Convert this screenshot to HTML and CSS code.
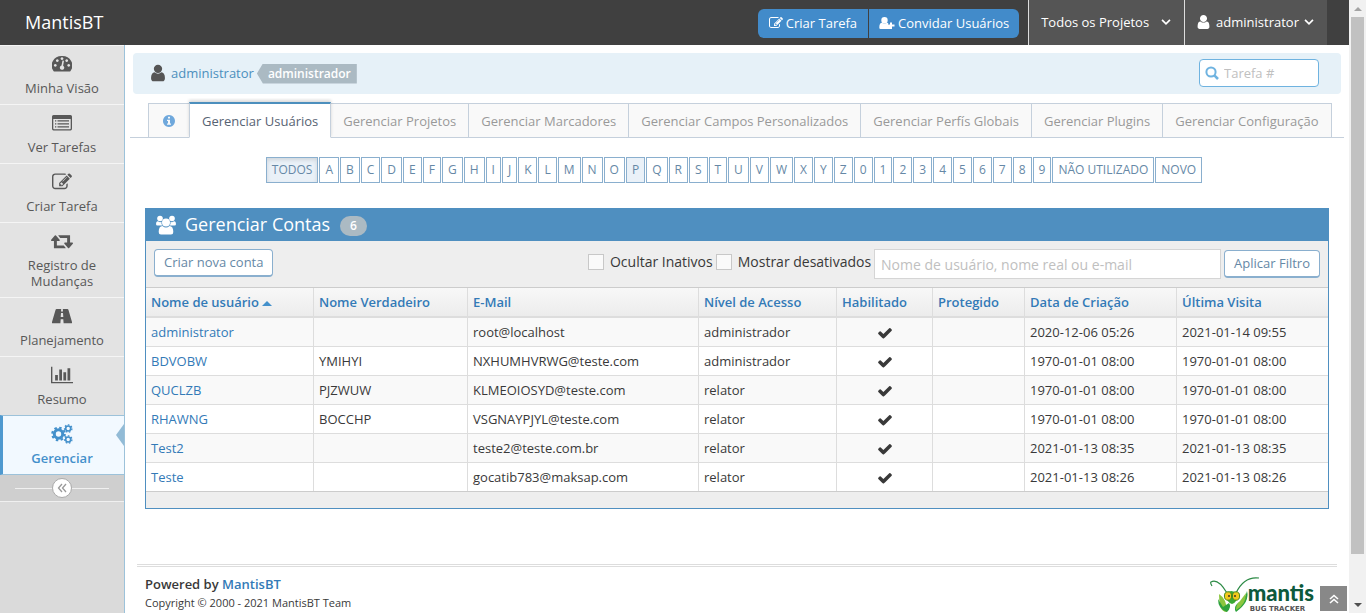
FILE: index.html
```html
<!DOCTYPE html>
<html lang="pt-BR">
<head>
<meta charset="utf-8">
<title>Gerenciar Usuários - MantisBT</title>
<link rel="stylesheet" href="styles.css">
</head>
<body>
<svg class="symbols" aria-hidden="true">
  <symbol id="i-user" viewBox="192 64 1408 1664"><path d="M1536 1399q0 109-62.500 187t-150.500 78h-854q-88 0-150.500-78t-62.500-187q0-85 8.500-160.500t31.500-152 58.500-131 94-89 134.500-34.500q131 128 313 128t313-128q76 0 134.500 34.500t94 89 58.500 131 31.500 152 8.500 160.500zm-256-887q0 159-112.500 271.500t-271.500 112.500-271.500-112.500-112.500-271.500 112.500-271.500 271.500-112.500 271.500 112.500 112.500 271.500z"/></symbol>
  <symbol id="i-edit" viewBox="0 0 1792 1792"><path d="M888 1184l116-116-152-152-116 116v56h96v96h56zm440-720q-16-16-33 1l-350 350q-17 17-1 33t33-1l350-350q17-17 1-33zm80 594v190q0 119-84.500 203.500t-203.500 84.500h-832q-119 0-203.500-84.500t-84.500-203.500v-832q0-119 84.500-203.500t203.500-84.500h832q63 0 117 25 15 7 18 23 3 17-9 29l-49 49q-14 14-32 8-23-6-45-6h-832q-66 0-113 47t-47 113v832q0 66 47 113t113 47h832q66 0 113-47t47-113v-126q0-13 9-22l64-64q15-15 35-7t20 29zm-96-738l288 288-672 672h-288v-288zm444 132l-92 92-288-288 92-92q28-28 68-28t68 28l152 152q28 28 28 68t-28 68z"/></symbol>
  <symbol id="i-check" viewBox="0 0 1792 1792"><path d="M1671 566q0 40-28 68l-724 724-136 136q-28 28-68 28t-68-28l-136-136-362-362q-28-28-28-68t28-68l136-136q28-28 68-28t68 28l294 295 656-657q28-28 68-28t68 28l136 136q28 28 28 68z"/></symbol>
  <symbol id="i-down" viewBox="0 0 10 10"><path d="M1.700 3.200l3.300 3.300L8.300 3.200" fill="none" stroke="currentColor" stroke-width="1.400"/></symbol>
</svg>
<div class="page">
<div class="app">
  <header class="navbar">
    <a class="brand" href="#">MantisBT</a>
    <div class="nav-buttons">
      <a href="#" class="nav-btn"><svg class="ic14"><use href="#i-edit"/></svg>Criar Tarefa</a>
      <a href="#" class="nav-btn"><svg class="ic16" viewBox="0 0 16 14"><path d="M5.500 1a3.200 3.200 0 0 1 0 6.400a3.200 3.200 0 0 1 0-6.400zM3 6.800q2.500 2 5 0q1 0 1.800.8H9v3h2V13H1.500Q.3 13 .3 11.500Q.3 7 3 6.800zM11 6.500h2v2h2.500v2H13V13h-2v-2.500H9v-2h2z"/></svg>Convidar Usuários</a>
    </div>
    <button class="nav-drop projects">Todos os Projetos<svg class="ic12"><use href="#i-down"/></svg></button>
    <button class="nav-drop account"><svg class="ic14 avatar"><use href="#i-user"/></svg>administrator<svg class="ic12"><use href="#i-down"/></svg></button>
  </header>
  <div class="body">
    <nav class="sidebar">
      <a href="#" class="item"><svg class="side-ic" viewBox="0 0 20 20"><path fill-rule="evenodd" d="M10 2a10 9.500 0 0 1 8.500 15q-.4.500-1 .500h-15q-.6 0-1-.500A10 9.500 0 0 1 10 2zM10 3.200a1.400 1.400 0 1 0 .01 0zM5.300 5.200a1.400 1.400 0 1 0 .01 0zM14.700 5.200a1.400 1.400 0 1 0 .01 0zM3.300 10a1.400 1.400 0 1 0 .01 0zM16.700 10a1.400 1.400 0 1 0 .01 0zM10.500 6.500l-1 5a2.200 2.200 0 1 0 1.600.2l.9-5z"/></svg>Minha Visão</a>
      <a href="#" class="item"><svg class="side-ic" viewBox="0 0 20 20"><path fill-rule="evenodd" d="M1.500 2h17Q20 2 20 3.500v12Q20 17.500 18.500 17.500h-17Q0 17.500 0 15.500v-12Q0 2 1.500 2zM1.300 6v9.500q0 .7.7.7h16q.7 0 .7-.7V6zM3 7.200h1.300v1.300H3zM5.500 7.200H17v1.300H5.500zM3 10.200h1.300v1.300H3zM5.500 10.200H17v1.300H5.500zM3 13.200h1.300v1.300H3zM5.500 13.200H17v1.300H5.500z"/></svg>Ver Tarefas</a>
      <a href="#" class="item"><svg class="side-ic"><use href="#i-edit"/></svg>Criar Tarefa</a>
      <a href="#" class="item"><svg class="side-ic wide" viewBox="0 130 1920 1530"><path d="M1280 1504q0 13-9.500 22.500t-22.500 9.500h-960q-8 0-13.500-2t-9-7-5.500-8-3-11.500-1-11.500v-600h-192q-26 0-45-19t-19-45q0-24 15-41l320-384q19-22 49-22t49 22l320 384q15 17 15 41 0 26-19 45t-45 19h-192v384h576q16 0 25 11l160 192q7 10 7 21zm640-416q0 24-15 41l-320 384q-20 23-49 23t-49-23l-320-384q-15-17-15-41 0-26 19-45t45-19h192v-384h-576q-16 0-25-12l-160-192q-7-9-7-20 0-13 9.500-22.500t22.500-9.500h960q8 0 13.500 2t9 7 5.500 8 3 11.500 1 11.500v600h192q26 0 45 19t19 45z"/></svg>Registro de Mudanças</a>
      <a href="#" class="item"><svg class="side-ic" viewBox="0 0 20 20"><path fill-rule="evenodd" d="M4.500 3h4.700L9 5.500h2L10.800 3h4.700q.6 0 .9.700L20 16q.3 1.300-.6 1.300H11.600l-.3-4H8.700l-.3 4H.6Q-.3 17.300 0 16L3.600 3.700Q3.900 3 4.500 3zM9 7l-.3 4h2.600L11 7z"/></svg>Planejamento</a>
      <a href="#" class="item"><svg class="side-ic wide" viewBox="0 0 2048 1792"><path d="M640 896v512h-256v-512h256zm384-512v1024h-256v-1024h256zm1024 1152v128h-2048v-1536h128v1408h1920zm-640-896v768h-256v-768h256zm384-384v1152h-256v-1152h256z"/></svg>Resumo</a>
      <a href="#" class="item active"><svg class="side-ic wide" viewBox="0 0 22 20"><g fill="none" stroke="currentColor"><circle cx="7.500" cy="10" r="4.200" stroke-width="3"/><circle cx="7.500" cy="10" r="6.300" stroke-width="2" stroke-dasharray="2.470 2.470"/><circle cx="17.200" cy="4.500" r="2.500" stroke-width="1.600"/><circle cx="17.200" cy="4.500" r="3.700" stroke-width="1.300" stroke-dasharray="1.660 1.660"/><circle cx="17.200" cy="15.500" r="2.500" stroke-width="1.600"/><circle cx="17.200" cy="15.500" r="3.700" stroke-width="1.300" stroke-dasharray="1.660 1.660"/></g></svg>Gerenciar</a>
      <div class="collapse"><button class="collapse-btn" aria-label="Recolher menu"><svg class="ic12" viewBox="0 0 12 12"><path d="M6 2L2.500 6L6 10M10 2L6.500 6L10 10" fill="none" stroke="currentColor" stroke-width="1.300"/></svg></button></div>
    </nav>
    <main class="main">
      <div class="crumbs">
        <svg class="crumb-user"><use href="#i-user"/></svg>
        <a href="#">administrator</a><span class="role">administrador</span>
        <label class="search"><svg class="ic14" viewBox="0 0 14 14"><path d="M9.600 9.600L13 13" stroke="currentColor" stroke-width="2.600"/><circle cx="6" cy="6" r="4.600" fill="none" stroke="currentColor" stroke-width="2"/></svg><input type="text" placeholder="Tarefa #" aria-label="Tarefa #"></label>
      </div>
      <ul class="tabs">
        <li><a href="#" class="info" aria-label="Informações"><svg class="ic12" viewBox="0 0 12 12"><path fill-rule="evenodd" d="M6 0a6 6 0 1 1-.01 0zM5 1.800v1.800h2V1.800zM4 4.700v1.200h1v2.600H4v1.300h4V8.500H7V4.700z"/></svg></a></li>
        <li class="current"><a href="#">Gerenciar Usuários</a></li>
        <li><a href="#">Gerenciar Projetos</a></li>
        <li><a href="#">Gerenciar Marcadores</a></li>
        <li><a href="#">Gerenciar Campos Personalizados</a></li>
        <li><a href="#">Gerenciar Perfís Globais</a></li>
        <li><a href="#">Gerenciar Plugins</a></li>
        <li><a href="#">Gerenciar Configuração</a></li>
      </ul>
      <div class="letters">
        <a href="#" class="on">TODOS</a><a href="#">A</a><a href="#">B</a><a href="#">C</a><a href="#">D</a><a href="#">E</a><a href="#">F</a><a href="#">G</a><a href="#">H</a><a href="#">I</a><a href="#">J</a><a href="#">K</a><a href="#">L</a><a href="#">M</a><a href="#">N</a><a href="#">O</a><a href="#" class="hover">P</a><a href="#">Q</a><a href="#">R</a><a href="#">S</a><a href="#">T</a><a href="#">U</a><a href="#">V</a><a href="#">W</a><a href="#">X</a><a href="#">Y</a><a href="#">Z</a><a href="#">0</a><a href="#">1</a><a href="#">2</a><a href="#">3</a><a href="#">4</a><a href="#">5</a><a href="#">6</a><a href="#">7</a><a href="#">8</a><a href="#">9</a><a href="#">NÃO UTILIZADO</a><a href="#">NOVO</a>
      </div>
      <section class="widget">
        <h4 class="widget-head"><svg class="users" viewBox="0 0 20 20"><circle cx="4" cy="3.500" r="2.800"/><circle cx="16" cy="3.500" r="2.800"/><path d="M2 6.300Q4 7.700 5.500 6.800Q5 9 6.500 10.500H1.500Q0 10.500 0 9Q0 6 2 6.300zM18 6.300Q16 7.700 14.500 6.800Q15 9 13.500 10.500h5Q20 10.500 20 9Q20 6 18 6.300z"/><circle cx="10" cy="7.500" r="4"/><path d="M6.500 11Q10 14 13.500 11Q17.300 11 17.300 17Q17.300 19.500 15 19.500H5Q2.700 19.500 2.700 17Q2.700 11 6.500 11z"/></svg><span class="title">Gerenciar Contas</span><span class="badge">6</span></h4>
        <form class="toolbar">
          <button type="button" class="btn create">Criar nova conta</button>
          <label class="check"><input type="checkbox">Ocultar Inativos</label>
          <label class="check"><input type="checkbox">Mostrar desativados</label>
          <input class="filter" type="text" placeholder="Nome de usuário, nome real ou e-mail" aria-label="Nome de usuário, nome real ou e-mail">
          <button type="button" class="btn">Aplicar Filtro</button>
        </form>
        <table>
          <colgroup><col class="c-user"><col class="c-name"><col class="c-mail"><col class="c-level"><col class="c-on"><col class="c-lock"><col class="c-date"><col></colgroup>
          <thead><tr><th><a href="#">Nome de usuário</a> <svg class="sort" viewBox="0 0 10 5"><path d="M0 5L5 0L10 5z"/></svg></th><th><a href="#">Nome Verdadeiro</a></th><th><a href="#">E-Mail</a></th><th><a href="#">Nível de Acesso</a></th><th><a href="#">Habilitado</a></th><th><a href="#">Protegido</a></th><th><a href="#">Data de Criação</a></th><th><a href="#">Última Visita</a></th></tr></thead>
          <tbody>
            <tr><td><a href="#">administrator</a></td><td></td><td>root@localhost</td><td>administrador</td><td class="tick"><svg><use href="#i-check"/></svg></td><td></td><td>2020-12-06 05:26</td><td>2021-01-14 09:55</td></tr>
            <tr><td><a href="#">BDVOBW</a></td><td>YMIHYI</td><td>NXHUMHVRWG@teste.com</td><td>administrador</td><td class="tick"><svg><use href="#i-check"/></svg></td><td></td><td>1970-01-01 08:00</td><td>1970-01-01 08:00</td></tr>
            <tr><td><a href="#">QUCLZB</a></td><td>PJZWUW</td><td>KLMEOIOSYD@teste.com</td><td>relator</td><td class="tick"><svg><use href="#i-check"/></svg></td><td></td><td>1970-01-01 08:00</td><td>1970-01-01 08:00</td></tr>
            <tr><td><a href="#">RHAWNG</a></td><td>BOCCHP</td><td>VSGNAYPJYL@teste.com</td><td>relator</td><td class="tick"><svg><use href="#i-check"/></svg></td><td></td><td>1970-01-01 08:00</td><td>1970-01-01 08:00</td></tr>
            <tr><td><a href="#">Test2</a></td><td></td><td>teste2@teste.com.br</td><td>relator</td><td class="tick"><svg><use href="#i-check"/></svg></td><td></td><td>2021-01-13 08:35</td><td>2021-01-13 08:35</td></tr>
            <tr><td><a href="#">Teste</a></td><td></td><td>gocatib783@maksap.com</td><td>relator</td><td class="tick"><svg><use href="#i-check"/></svg></td><td></td><td>2021-01-13 08:26</td><td>2021-01-13 08:26</td></tr>
          </tbody>
        </table>
        <div class="widget-foot"></div>
      </section>
      <footer class="footer">
        <div class="credits">
          <strong>Powered by <a href="#">MantisBT</a></strong>
          <small>Copyright © 2000 - 2021 MantisBT Team</small>
        </div>
        <a href="#" class="logo">
          <svg class="mantis" viewBox="0 0 50 38"><path d="M17 17Q8 2 1 6Q0 7 2 10M26 17Q34 0 49 2" fill="none" stroke="#2c8a45" stroke-width="1.200"/><path d="M9 18Q17 23 17 36Q12 36 10 30Q9 24 9 18z" fill="#8cc63f"/><path d="M8 23Q8 33 17 36Q22 31 19 27L13 31z" fill="#2fa33e"/><path d="M37 15Q40 26 26 36Q23 31 28 27Q35 24 37 15z" fill="#2fa33e"/><path d="M36 17Q36 29 26 34Q26 28 30 25z" fill="#8cc63f"/><path d="M15 18Q21 12 28 18Q27 27 22 28Q17 27 15 18z" fill="#39a935"/><ellipse cx="18" cy="20" rx="3.600" ry="4.200" fill="#f2c81d" stroke="#448a20"/><ellipse cx="26" cy="20" rx="3.600" ry="4.200" fill="#f2c81d" stroke="#448a20"/><circle cx="19" cy="20" r="1" fill="#432"/><circle cx="25" cy="20" r="1" fill="#432"/></svg>
          <span class="logo-words"><span class="logo-name">mantis</span><span class="logo-sub">BUG TRACKER</span></span>
        </a>
      </footer>
    </main>
  </div>
  <a href="#" class="to-top" aria-label="Voltar ao topo"><svg class="ic12" viewBox="0 0 12 12"><path d="M2 6L6 2.500L10 6M2 10L6 6.500L10 10" fill="none" stroke="currentColor" stroke-width="1.600"/></svg></a>
</div>
<div class="scrollbar" aria-hidden="true"><span class="arrow up"></span><span class="thumb"></span><span class="arrow down"></span></div>
</div>
</body>
</html>
```
FILE: styles.css
```css
* { box-sizing: border-box; }
body { margin: 0; font: 13px/18px "Open Sans", "Noto Sans", sans-serif; color: #393939; background: #fff; }
a { color: #337ab7; text-decoration: none; }
button, input { font: inherit; }
svg { fill: currentColor; flex: none; }
.symbols { display: none; }
.ic12 { width: 12px; height: 12px; }
.ic14 { width: 14px; height: 14px; }
.ic16 { width: 16px; height: 14px; }

.page { display: flex; height: 100vh; overflow: hidden; }
.app { flex: 1; min-width: 0; display: flex; flex-direction: column; position: relative; }

/* Top bar */
.navbar { display: flex; align-items: stretch; height: 45px; flex: none; padding-right: 22px; background: #404040; }
.brand { margin-right: auto; padding-left: 25px; font-size: 18px; line-height: 45px; color: #fff; }
.nav-buttons { display: flex; gap: 1px; align-self: center; height: 29px; margin: 2px 9px 0 0; }
.nav-btn { display: flex; align-items: center; gap: 3px; padding: 0 10px 2px; background: #428bca; color: #fff; }
.nav-btn:first-child { padding: 0 11px 2px; border-radius: 6px 0 0 6px; }
.nav-btn:last-child { border-radius: 0 6px 6px 0; }
.nav-drop { display: flex; align-items: center; padding: 0 12px 2px; border: 0; border-left: 1px solid #ddd; background: #555; color: #fff; }
.projects { gap: 11px; }
.account { gap: 4px; }
.account .avatar { width: 13px; height: 16px; margin-right: 2px; }

/* Side menu */
.body { display: flex; flex: 1; min-height: 0; }
.sidebar { flex: none; width: 125px; background: #dadada; border-right: 1px solid #9cc2da; }
.item { display: flex; flex-direction: column; align-items: center; gap: 6px; padding: 8px 20px 8px; border-top: 1px solid #f5f5f5; background: #e3e3e3; color: #585858; text-align: center; line-height: 16px; }
.side-ic { width: 20px; height: 20px; }
.side-ic.wide { width: 22px; height: 20px; }
.item.active { position: relative; padding-left: 17px; border-top-color: #9cc2da; border-left: 3px solid #4f99cf; border-bottom: 1px solid #9cc2da; background: #f2f9ff; color: #4390cb; font-weight: 600; }
.item.active::after { content: ""; position: absolute; right: 0; top: 8px; border: 11px solid transparent; border-left-width: 0; border-right: 8px solid #92bbd6; }
.collapse { display: flex; align-items: center; justify-content: center; height: 27px; background: linear-gradient(#f0f0f0, #f0f0f0) center / 94px 1px no-repeat #cfcfcf; border-bottom: 1px solid #f0f0f0; }
.collapse-btn { display: grid; place-items: center; width: 20px; height: 20px; padding: 0; border: 1px solid #aaa; border-radius: 50%; background: #fff; color: #999; }

/* Content */
.main { flex: 1; min-width: 0; display: flex; flex-direction: column; padding: 8px 8px 0; }
.crumbs { display: flex; align-items: center; height: 41px; flex: none; padding: 0 22px 2px 16px; border-radius: 4px; background: #e6f1f8; }
.crumb-user { width: 18px; height: 18px; margin-right: 4px; color: #555; }
.crumbs a { color: #4c8fbd; }
.role { margin: 2px 0 0 3px; padding: 0 6px 0 11px; background: #abbac3; color: #fff; font-size: 12px; line-height: 20px; font-weight: 600; clip-path: polygon(0 50%, 6px 0, 100% 0, 100% 100%, 6px 100%); }
.search { display: flex; align-items: center; gap: 5px; width: 120px; height: 28px; margin-left: auto; padding-left: 5px; border: 1px solid #6fb3e0; border-radius: 4px; background: #fff; color: #6fb3e0; }
.search input { flex: 1; min-width: 0; padding: 0; border: 0; background: none; outline: 0; }
::placeholder { color: #c0c0c0; opacity: 1; }

.tabs { display: flex; margin: 8px -3px 0; padding: 0 12px 0 18px; list-style: none; border-bottom: 1px solid #c5d0dc; }
.tabs li { display: flex; flex: none; margin: 0 -1px -1px 0; }
.tabs a { margin-top: 1px; padding: 8px 12px 7px; border: 1px solid #c5d0dc; background: #f9f9f9; color: #999; white-space: nowrap; }
.tabs .info { display: flex; align-items: center; padding: 0 14px; color: #6fa8dc; }
.tabs .current { position: relative; }
.tabs .current a { margin-top: 0; border-top: 2px solid #4c8fbd; border-bottom-color: #fff; background: #fff; color: #576373; box-shadow: 0 -2px 3px rgba(0, 0, 0, .15); clip-path: inset(-4px -3px 0); }

.letters { display: flex; justify-content: center; gap: 1px; margin: 19px 6px 0 0; font-size: 12px; }
.letters a { padding: 3px 5px; border: 1px solid #8aafce; color: #6688a6; background: #fff; }
.letters .on, .letters .hover { background: #eaf1f8; }
.letters .on { box-shadow: inset 0 2px 4px rgba(0, 0, 0, .12); }

.widget { margin: 25px 12px 0; border: 1px solid #4f8fc0; border-top: 0; }
.widget-head { display: flex; align-items: center; height: 33px; margin: 0 -1px; padding-left: 11px; background: #4f8fc0; color: #fff; font-size: 18px; font-weight: 400; }
.title { padding-bottom: 2px; }
.users { width: 20px; height: 20px; margin-right: 9px; }
.badge { margin: 2px 0 0 10px; padding: 0 10px; border-radius: 10px; background: #abbac3; font-size: 12px; line-height: 20px; font-weight: 600; }
.toolbar { display: flex; align-items: center; gap: 3px; height: 46px; padding: 0 8px; background: #eee; }
.btn { height: 28px; padding: 0 9px 2px; border: 1px solid #8aafce; border-bottom-width: 2px; border-radius: 4px; background: #fff; color: #6688a6; white-space: nowrap; }
.create { margin: 0 auto 2px 0; }
.check { display: flex; align-items: center; gap: 6px; padding-bottom: 4px; font-size: 14px; white-space: nowrap; }
.check input { appearance: none; width: 16px; height: 16px; margin: 0; border: 1px solid #c8c8c8; background: #fafafa; }
.filter { width: 347px; height: 30px; padding: 0 6px; border: 1px solid #d5d5d5; background: #fff; font-size: 14px; }

table { width: 100%; table-layout: fixed; border-collapse: separate; border-spacing: 0; border-top: 1px solid #ccc; border-bottom: 1px solid #ccc; }
.c-user { width: 168px; }
.c-name { width: 154px; }
.c-mail { width: 231px; }
.c-level { width: 138px; }
.c-on { width: 96px; }
.c-lock { width: 92px; }
.c-date { width: 152px; }
th, td { padding: 5px; border-right: 1px solid #ddd; text-align: left; }
th { height: 30px; border-bottom: 2px solid #ddd; background: linear-gradient(#f8f8f8, #ececec); font-weight: 600; }
td { height: 29px; border-bottom: 1px solid #ddd; }
th:last-child, td:last-child { border-right: 0; }
tbody tr:last-child td { height: 28px; border-bottom: 0; }
tbody tr:nth-child(odd) { background: #f9f9f9; }
.sort { width: 10px; height: 5px; margin-bottom: 1px; color: #4390cb; }
.tick { padding: 2px 0 0; text-align: center; }
.tick svg { display: block; width: 16px; height: 16px; margin: 0 auto; }
.widget-foot { height: 16px; background: #eee; }

/* Footer */
.footer { display: flex; justify-content: space-between; margin: 55px 4px 0; padding: 8px 23px 0 8px; border-top: 3px double #ddd; }
.credits { display: flex; flex-direction: column; }
.credits strong { font-weight: 600; }
.credits small { font-size: 11px; line-height: 20px; }
.logo { display: flex; margin-top: 1px; color: #0d5a3c; }
.mantis { width: 50px; height: 38px; margin-right: -12px; }
.logo-words { display: flex; flex-direction: column; gap: 1px; padding-top: 6px; }
.logo-name { font: 900 22px/22px Lato, sans-serif; }
.logo-sub { padding-left: 2px; font: 700 7px/8px "DejaVu Sans", sans-serif; color: #555; }
.to-top { position: absolute; right: 2px; bottom: 2px; display: grid; place-items: center; width: 27px; height: 25px; background: #888; color: #fff; }

/* Scroll track */
.scrollbar { flex: none; display: flex; flex-direction: column; align-items: center; width: 17px; background: #f1f1f1; }
.arrow { height: 17px; display: grid; place-items: center; }
.arrow::before { content: ""; border: 4px solid transparent; }
.up::before { border-top: 0; border-bottom-color: #a3a3a3; }
.down::before { border-bottom: 0; border-top-color: #505050; }
.thumb { width: 13px; flex: 1; margin-bottom: 42px; background: #c1c1c1; }
```
